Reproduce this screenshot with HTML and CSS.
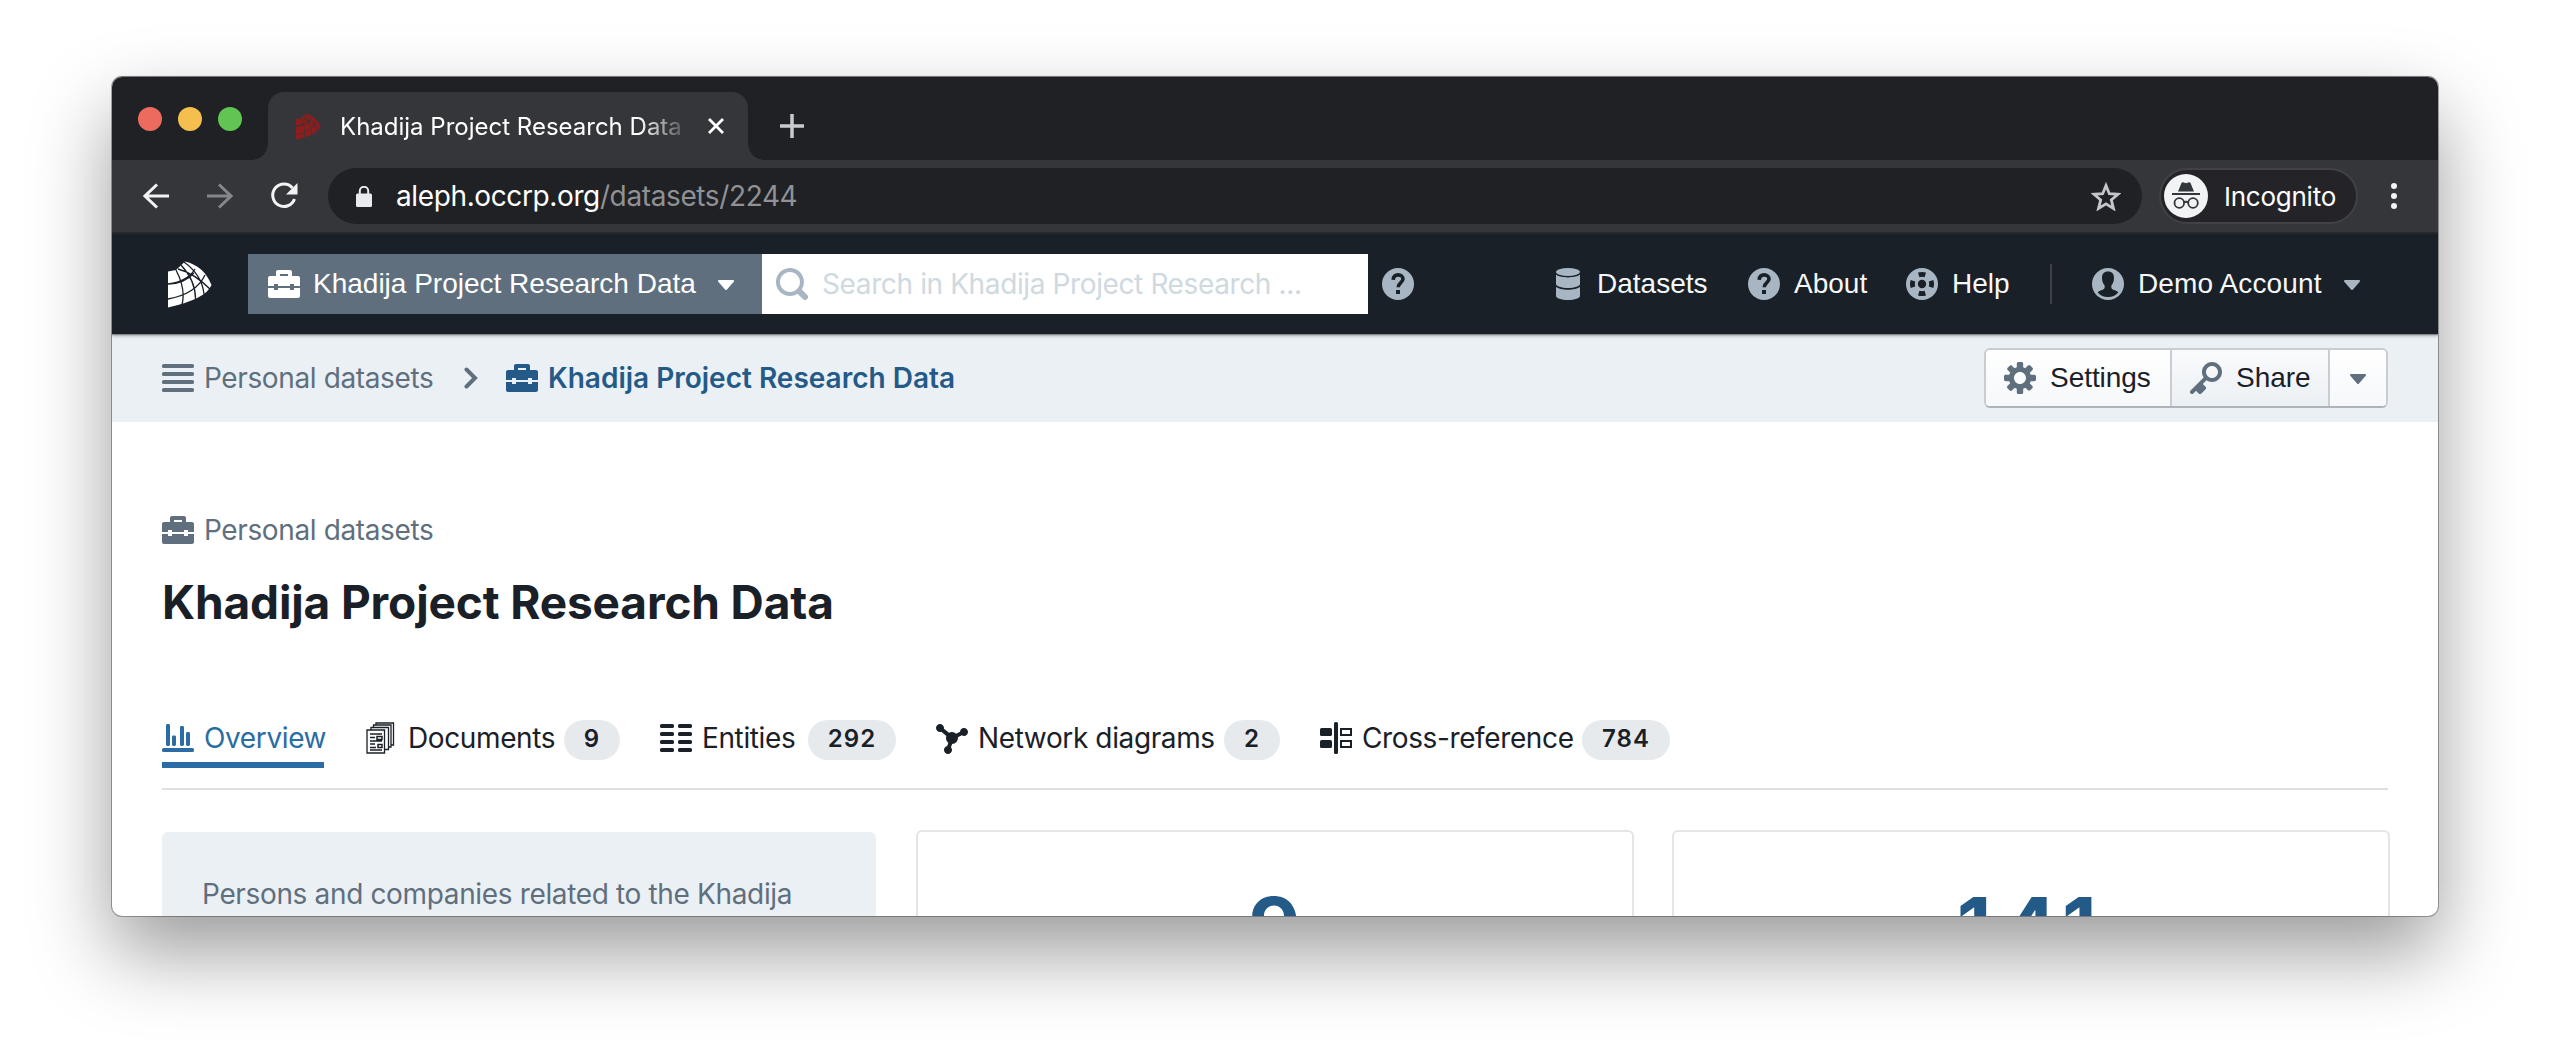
FILE: index.html
```html
<!DOCTYPE html>
<html lang="en">
<head>
<meta charset="utf-8">
<title>Khadija Project Research Data - Aleph</title>
<link rel="stylesheet" href="styles.css">
</head>
<body>
<svg class="defs" width="0" height="0">
  <symbol id="briefcase" viewBox="0 0 16 16"><path d="M15 3.980h-3v-2c0-.55-.45-1-1-1H5c-.55 0-1 .45-1 1v2H1c-.55 0-1 .45-1 1v4h3v-1h2v1h6v-1h2v1h3v-4c0-.55-.45-1-1-1zm-5 0H6v-1h4v1zm3 7h-2v-1H5v1H3v-1H0v4c0 .55.45 1 1 1h14c.55 0 1-.45 1-1v-4h-3v1z"/></symbol>
  <symbol id="caret" viewBox="0 0 16 16"><path d="M12 6.500c0-.28-.22-.5-.5-.5h-7a.495.495 0 00-.37.830l3.500 4c.09.1.22.170.37.170s.28-.07.37-.17l3.500-4c.08-.09.13-.2.13-.33z"/></symbol>
  <symbol id="help" viewBox="0 0 16 16"><circle cx="8" cy="8" r="8"/><path d="M5.600 5.900C5.700 4.300 6.700 3.450 8.100 3.450S10.500 4.300 10.500 5.500C10.500 7.300 8.100 7.300 8.100 9.600" fill="none" stroke="#1a2027" stroke-width="1.800"/><path d="M7 11h2v2H7z" fill="#1a2027"/></symbol>
  <symbol id="globe" viewBox="0 0 44 47">
    <path d="M0 10.500L8 9L17 0.500Q36 5 43.500 24Q38 38 0 46.500Z" fill="currentColor"/>
    <g fill="none" class="globe-lines" stroke-width="1.300"><path d="M0 23Q20 20 27 8M0 38Q28 33 37 14M8 9Q18 28 14 44M13 4Q28 20 27.500 39M16 1Q34 14 36 33M10 8Q26 12 43 29M0 23Q16 23 26 12"/></g>
  </symbol>
</svg>

<div class="window">
  <div class="tabstrip">
    <div class="lights"><i class="red"></i><i class="yellow"></i><i class="green"></i></div>
    <div class="tab">
      <svg class="favicon" viewBox="0 0 44 47"><use href="#globe"/></svg>
      <span class="tab-title">Khadija Project Research Data - Aleph</span>
      <svg class="close" viewBox="0 0 18 18"><path d="M2 2l14 14M16 2L2 16"/></svg>
    </div>
    <svg class="plus" viewBox="0 0 24 24"><path d="M12 0v24M0 12h24"/></svg>
  </div>

  <div class="toolbar">
    <svg class="back" viewBox="0 0 26 26"><path d="M26 13H2M14 1.500L2 13l12 11.500"/></svg>
    <svg class="forward" viewBox="0 0 26 26"><path d="M0 13h24M12 1.500L24 13 12 24.500"/></svg>
    <svg class="reload" viewBox="0 0 28 28"><path d="M22.500 6A11.200 11.200 0 1 0 24.500 17" fill="none" stroke="#f1f3f4" stroke-width="3"/><path d="M27.500 1v11.500H16z" fill="#f1f3f4"/></svg>
    <div class="omnibox">
      <svg class="lock" viewBox="0 0 16 21"><rect y="7.500" width="16" height="13.500" rx="1.500" fill="#e8eaed"/><path d="M3.800 8V5a4.200 4.200 0 018.400 0v3" fill="none" stroke="#e8eaed" stroke-width="2"/></svg>
      <span class="url"><b>aleph.occrp.org</b>/datasets/2244</span>
      <svg class="star" viewBox="0 0 30 29"><path d="M15 3.500l3.300 8.200 8.700.6-6.700 5.600 2.200 8.600L15 21.800l-7.500 4.700 2.200-8.600L3 12.300l8.700-.6z"/></svg>
    </div>
    <div class="incognito">
      <svg viewBox="0 0 44 44"><circle cx="22" cy="22" r="22" fill="#f1f3f4"/><path d="M14 17.500L17.500 9q.5-1 1.500-.7l3 .9 3-.9q1-.3 1.500.7L30 17.500zM8 19h28v2H8z" fill="#33363a"/><g fill="none" stroke="#33363a" stroke-width="1.800"><circle cx="15.300" cy="29" r="4.800"/><circle cx="29" cy="29" r="4.800"/><path d="M20 28.500q2.100-1.500 4.200 0"/></g></svg>
      <span>Incognito</span>
    </div>
    <div class="dots"><i></i><i></i><i></i></div>
  </div>

  <div class="navbar">
    <svg class="logo" viewBox="0 0 44 47"><use href="#globe"/></svg>
    <div class="scope"><svg class="icon"><use href="#briefcase"/></svg><span>Khadija Project Research Data</span><svg class="icon"><use href="#caret"/></svg></div>
    <div class="search"><svg class="icon" viewBox="0 0 16 16"><path d="M15.550 13.430l-2.670-2.680a6.940 6.940 0 001.110-3.760c0-3.870-3.130-7-7-7s-7 3.130-7 7 3.130 7 7 7c1.390 0 2.680-.42 3.760-1.110l2.680 2.670a1.498 1.498 0 102.120-2.120zm-8.560-1.440c-2.760 0-5-2.240-5-5s2.240-5 5-5 5 2.240 5 5-2.240 5-5 5z"/></svg><span>Search in Khadija Project Research ...</span></div>
    <svg class="icon search-help"><use href="#help"/></svg>
    <div class="menu">
      <a class="m-data"><svg class="icon" viewBox="0 0 16 16"><ellipse cx="8" cy="2" rx="6" ry="2"/><path d="M2 3.300c1 .9 3.400 1.400 6 1.400s5-.5 6-1.400V8c0 1.100-2.700 2-6 2s-6-.9-6-2z"/><path d="M2 9.400c1 1 3.400 1.500 6 1.500s5-.5 6-1.500V14c0 1.100-2.700 2-6 2s-6-.9-6-2z"/></svg><span>Datasets</span></a>
      <a class="m-about"><svg class="icon"><use href="#help"/></svg><span>About</span></a>
      <a class="m-help"><svg class="icon" viewBox="0 0 16 16"><circle cx="8" cy="8" r="8"/><g fill="#1a2027"><circle cx="8" cy="8" r="2.100"/><path d="M6 2.300q2-.7 4 0L9.300 4.600q-1.300-.4-2.600 0zM6 13.700q2 .7 4 0l-.7-2.300q-1.300.4-2.600 0zM2.300 6q-.7 2 0 4l2.300-.7q-.4-1.300 0-2.600zM13.700 6q.7 2 0 4l-2.300-.7q.4-1.300 0-2.600z"/></g></svg><span>Help</span></a>
      <i class="divider"></i>
      <a class="m-user"><svg class="icon" viewBox="0 0 16 16"><circle cx="8" cy="8" r="8"/><path d="M8 1.700c2 0 3.100 1.300 3 3.400-.1 1.400-.4 2.600-1.300 3.600-.2 1.600.3 1.900 1.700 2.400.9.300 1.500.7 1.700 1.300A6.700 6.700 0 018 14.500a6.700 6.700 0 01-5.100-2.100c.2-.6.8-1 1.700-1.300 1.400-.5 1.900-.8 1.700-2.400C5.400 7.700 5.100 6.500 5 5.100c-.1-2.100 1-3.400 3-3.400z" fill="#1a2027"/></svg><span>Demo Account</span><svg class="icon"><use href="#caret"/></svg></a>
    </div>
  </div>

  <div class="subheader">
    <svg class="icon" viewBox="0 0 16 16"><rect y="1" width="16" height="2" rx=".8"/><rect y="5" width="16" height="2" rx=".8"/><rect y="9" width="16" height="2" rx=".8"/><rect y="13" width="16" height="2" rx=".8"/></svg>
    <span class="crumb">Personal datasets</span>
    <svg class="chevron" viewBox="0 0 14 22"><path d="M2.500 2.500L11 11l-8.500 8.500"/></svg>
    <svg class="icon blue"><use href="#briefcase"/></svg>
    <span class="crumb current">Khadija Project Research Data</span>
    <div class="buttons">
      <div class="btn b-settings"><svg class="icon" viewBox="0 0 16 16"><path d="M15.190 6.390h-1.850c-.11-.37-.27-.71-.45-1.040l1.360-1.360c.31-.31.31-.82 0-1.130l-1.130-1.130a.803.803 0 00-1.130 0l-1.360 1.360c-.33-.17-.67-.33-1.040-.44V.79c0-.44-.36-.8-.8-.8h-1.600c-.44 0-.8.36-.8.8v1.860c-.39.12-.75.28-1.100.47l-1.300-1.300c-.3-.3-.79-.3-1.090 0L1.820 2.910c-.3.3-.3.79 0 1.090l1.300 1.300c-.2.34-.36.7-.48 1.090H.79c-.44 0-.8.36-.8.8v1.600c0 .44.36.8.8.8h1.850c.11.37.27.71.45 1.040l-1.360 1.360c-.31.31-.31.82 0 1.130l1.130 1.130c.31.31.82.31 1.130 0l1.360-1.360c.33.18.67.33 1.040.44v1.860c0 .44.36.8.8.8h1.600c.44 0 .8-.36.8-.8v-1.860c.39-.12.75-.28 1.100-.47l1.300 1.300c.3.3.79.3 1.090 0l1.090-1.090c.3-.3.3-.79 0-1.090l-1.300-1.300c.19-.35.36-.71.48-1.100h1.850c.44 0 .8-.36.8-.8v-1.600a.816.816 0 00-.81-.79zm-7.200 4.600c-1.660 0-3-1.340-3-3s1.340-3 3-3 3 1.340 3 3-1.340 3-3 3z"/></svg><span>Settings</span></div>
      <div class="btn b-share"><svg class="icon" viewBox="0 0 16 16"><path d="M11 0C8.240 0 6 2.240 6 5c0 1.020.31 1.960.83 2.750L.29 14.290a1.003 1.003 0 001.420 1.420L3 14.410l1.290 1.290c.18.190.43.3.71.3s.53-.11.71-.29l2-2a1.003 1.003 0 000-1.420L6.410 11l1.830-1.830c.8.520 1.740.83 2.760.83 2.760 0 5-2.240 5-5s-2.240-5-5-5zm0 8c-1.660 0-3-1.340-3-3s1.340-3 3-3 3 1.340 3 3-1.340 3-3 3z"/></svg><span>Share</span></div>
      <div class="btn b-more"><svg class="icon"><use href="#caret"/></svg></div>
    </div>
  </div>

  <div class="content">
    <div class="category"><svg class="icon"><use href="#briefcase"/></svg><span>Personal datasets</span></div>
    <h1>Khadija Project Research Data</h1>
    <div class="tabs">
      <div class="item active"><svg class="icon" viewBox="0 0 16 16"><rect y="13" width="16" height="2" rx=".8"/><rect x="2" y="1" width="2" height="11" rx=".7"/><rect x="5" y="6.700" width="2" height="5.300" rx=".7"/><rect x="9" y="2" width="2" height="10" rx=".7"/><rect x="12" y="5" width="2" height="7" rx=".7"/></svg><span class="w-overview">Overview</span></div>
      <div class="item docs"><svg class="icon" viewBox="0 0 32 32"><g fill="#fff" stroke="#1a2027" stroke-width="1.300"><path d="M10 1h17.500v22H10z"/><path d="M7.500 3h17.500v22H7.500z"/><path d="M5 5.500h17.500v22H5z"/><path d="M1 8h17.500v23H1z"/></g><path d="M4 12h12M4 15.500h5M11 14.500h5v3h-5zM4 19h12M4 22h5M4 25.500h6M12 22.500h4v3h-4zM4 28h12" fill="none" stroke="#1a2027" stroke-width="1.500"/></svg><span class="w-documents">Documents</span><em class="one">9</em></div>
      <div class="item"><svg class="icon" viewBox="0 0 16 16"><rect y="1" width="7" height="2" rx=".8"/><rect y="5" width="7" height="2" rx=".8"/><rect y="9" width="7" height="2" rx=".8"/><rect y="13" width="7" height="2" rx=".8"/><rect x="9" y="1" width="7" height="2" rx=".8"/><rect x="9" y="5" width="7" height="2" rx=".8"/><rect x="9" y="9" width="7" height="2" rx=".8"/><rect x="9" y="13" width="7" height="2" rx=".8"/></svg><span class="w-entities">Entities</span><em>292</em></div>
      <div class="item"><svg class="icon" viewBox="0 0 16 16"><path d="M14 3c-1.060 0-1.920.83-1.990 1.880l-1.930.97A2.950 2.950 0 008 5c-.56 0-1.080.16-1.520.43L3.970 3.340C3.980 3.230 4 3.120 4 3c0-1.100-.9-2-2-2s-2 .9-2 2 .9 2 2 2c.24 0 .47-.05.68-.13l2.510 2.090C5.080 7.290 5 7.630 5 8c0 .96.46 1.810 1.160 2.350l-.56 1.690c-.91.190-1.600.99-1.600 1.960 0 1.100.9 2 2 2s2-.9 2-2c0-.51-.2-.97-.51-1.320l.56-1.690A2.990 2.990 0 0011 8c0-.12-.02-.24-.04-.36l1.940-.97c.32.2.69.33 1.100.33 1.100 0 2-.9 2-2s-.9-2-2-2z"/></svg><span class="w-network">Network diagrams</span><em class="one">2</em></div>
      <div class="item"><svg class="icon" viewBox="0 0 16 16"><rect y="3" width="6" height="4" rx=".8"/><rect y="9" width="6" height="4" rx=".8"/><rect x="7" y="0" width="2" height="16" rx=".8"/><path d="M10.500 3.500h5v3h-5zM10.500 9.500h5v3h-5z" fill="none" stroke="#1a2027"/></svg><span class="w-cross">Cross-reference</span><em>784</em></div>
    </div>
    <div class="cards">
      <div class="card summary">Persons and companies related to the Khadija</div>
      <div class="card stat">9</div>
      <div class="card stat">141</div>
    </div>
  </div>
</div>
</body>
</html>
```
FILE: styles.css
```css
* { box-sizing: border-box; }
body {
  margin: 0;
  width: 2550px;
  height: 1064px;
  overflow: hidden;
  background: #fff;
  padding: 77px 112px 0;
  font-family: Inter, "Liberation Sans", sans-serif;
  font-size: 28px;
  letter-spacing: -.38px;
  color: #1a2027;
}
svg { display: block; flex: none; }
.defs { position: absolute; }
.icon { width: 32px; height: 32px; fill: currentColor; }
span, a { white-space: nowrap; }

.window {
  width: 2326px;
  height: 839px;
  border-radius: 10px;
  overflow: hidden;
  background: #fff;
  box-shadow: 0 0 0 1px rgba(0, 0, 0, .3), 0 -1px 1px rgba(0, 0, 0, .3), 0 36px 80px rgba(0, 0, 0, .4);
}

/* browser chrome */
.tabstrip { height: 83px; background: #202124; display: flex; padding-left: 26px; }
.lights { display: flex; gap: 16px; padding-top: 30px; width: 130px; }
.lights i { width: 24px; height: 24px; border-radius: 50%; }
.red { background: #ed6a5e; }
.yellow { background: #f5bf4f; }
.green { background: #61c554; }
.tab {
  position: relative;
  width: 480px;
  height: 68px;
  margin-top: 15px;
  background: #35363a;
  border-radius: 16px 16px 0 0;
  display: flex;
  align-items: center;
  padding-left: 28px;
}
.tab::before, .tab::after {
  content: "";
  position: absolute;
  bottom: 0;
  width: 16px;
  height: 16px;
}
.tab::before { left: -16px; background: radial-gradient(circle at 0 0, transparent 15.5px, #35363a 16px); }
.tab::after { right: -16px; background: radial-gradient(circle at 100% 0, transparent 15.5px, #35363a 16px); }
.favicon { width: 25px; height: 27px; color: #8f1d1d; --line: #35363a; }
.globe-lines { stroke: var(--line); }
.tab-title {
  margin-left: 19px;
  width: 353px;
  overflow: hidden;
  color: #fff;
  font-size: 24px;
  letter-spacing: 0;
  -webkit-mask-image: linear-gradient(90deg, #000 300px, transparent 352px);
  mask-image: linear-gradient(90deg, #000 300px, transparent 352px);
}
.close { width: 18px; height: 18px; margin-left: 14px; fill: none; stroke: #fff; stroke-width: 2.8; }
.plus { width: 24px; height: 24px; margin: 37px 0 0 32px; stroke: #c8cacd; stroke-width: 3.5; }

.toolbar {
  height: 74px;
  background: #35363a;
  border-bottom: 2px solid #28292c;
  display: flex;
  align-items: center;
}
.back, .forward { width: 26px; height: 26px; fill: none; stroke: #f1f3f4; stroke-width: 3; }
.back { margin-left: 31px; }
.forward { margin-left: 38px; stroke: #85868a; }
.reload { width: 28px; height: 28px; margin-left: 37px; }
.omnibox {
  width: 1814px;
  height: 56px;
  margin-left: 30px;
  border-radius: 28px;
  background: #202124;
  display: flex;
  align-items: center;
  padding: 0 21px 0 28px;
}
.lock { width: 16px; height: 21px; }
.url { margin-left: 24px; color: #8f9195; flex: 1; }
.url b { color: #fff; font-weight: 400; }
.star { width: 30px; height: 29px; fill: none; stroke: #c4c6c9; stroke-width: 2.8; }
.incognito {
  width: 199px;
  height: 56px;
  margin-left: 17px;
  border-radius: 28px;
  border: 2px solid #414246;
  background: #242428;
  display: flex;
  align-items: center;
  padding-left: 3px;
  gap: 16px;
  color: #fff;
  font-size: 26px;
  letter-spacing: -.25px;
}
.incognito svg { width: 44px; height: 44px; }
.dots { margin-left: 33px; display: grid; gap: 4px; }
.dots i { width: 6px; height: 6px; border-radius: 50%; background: #f1f3f4; }

/* app header */
.navbar {
  position: relative;
  height: 100px;
  background: #1a2027;
  display: flex;
  align-items: center;
  padding-left: 56px;
  font-family: "Liberation Sans", Arial, sans-serif;
  letter-spacing: 0;
  color: #f5f8fa;
  box-shadow: 0 1px 1px rgba(16, 22, 26, .3), 0 2px 3px rgba(16, 22, 26, .3);
}
.logo { width: 44px; height: 47px; color: #fff; --line: #1a2027; }
.scope {
  width: 514px;
  height: 60px;
  margin-left: 36px;
  background: #5f6f7e;
  display: flex;
  align-items: center;
  gap: 13px;
  padding-left: 20px;
  color: #fff;
}
.scope svg:last-child { margin-left: 1px; }
.search {
  width: 606px;
  height: 60px;
  background: #fff;
  color: #a7b6c2;
  display: flex;
  align-items: center;
  gap: 14px;
  padding-left: 14px;
  font-family: Inter, sans-serif;
  letter-spacing: -.38px;
}
.search span { color: #ced9e0; }
.search-help { margin-left: 14px; color: #a7b6c2; }
.menu { margin-left: 138px; display: flex; align-items: center; }
.menu a { display: flex; align-items: center; gap: 14px; }
.menu svg { color: #a7b6c2; }
.menu .m-data { width: 196px; gap: 13px; }
.m-about { width: 158px; }
.m-help { width: 144px; }
.m-user { letter-spacing: .12px; }
.divider { width: 2px; height: 40px; background: #3d4249; margin-right: 40px; }

/* breadcrumbs */
.subheader {
  height: 88px;
  background: #ebf0f4;
  display: flex;
  align-items: center;
  padding: 0 50px;
  color: #5f6f7e;
}
.crumb { margin-left: 10px; width: 229px; }
.current { color: #245a88; font-weight: 600; letter-spacing: 0; }
.chevron { width: 14px; height: 22px; margin: 0 28px 0 31px; fill: none; stroke: #5f6f7e; stroke-width: 4; stroke-linecap: round; }
.blue { color: #245a88; }
.buttons {
  margin-left: auto;
  height: 60px;
  border: 2px solid #c9cdd1;
  border-bottom-color: #aeb4ba;
  border-radius: 6px;
  overflow: hidden;
  display: flex;
  font-family: "Liberation Sans", Arial, sans-serif;
  letter-spacing: -.05px;
  background: #f8fafb;
}
.btn {
  display: flex;
  align-items: center;
  gap: 14px;
  padding-left: 18px;
  border-left: 2px solid #c9cdd1;
  background: linear-gradient(#fff, #f6f8fa);
}
.btn:first-child { border-left: 0; }
.btn span { color: #1a2027; }
.b-settings { width: 184px; }
.b-share { width: 158px; background: linear-gradient(#fafbfc, #ebf0f4); }
.b-more { width: 58px; padding-left: 12px; }

/* dataset page */
.content { padding: 92px 50px 0; }
.category { display: flex; align-items: center; gap: 10px; height: 32px; color: #5f6f7e; }
h1 { margin: 26px 0 0; font-size: 46px; line-height: 60px; font-weight: 700; letter-spacing: -.13px; }
.tabs { display: flex; gap: 40px; height: 90px; margin-top: 68px; border-bottom: 2px solid #dce0e5; }
.item { display: flex; align-items: center; height: 68px; padding-top: 8px; }
.item span { margin-left: 10px; }
.docs { margin-left: 2px; }
.w-overview { width: 120px; }
.w-documents { width: 145px; }
.w-entities { width: 95px; }
.w-network { width: 235px; }
.w-cross { width: 209px; }
.item em {
  margin: 4px 0 0 11px;
  width: 88px;
  height: 40px;
  line-height: 38px;
  border-radius: 20px;
  background: #e7eaed;
  text-align: center;
  font-style: normal;
  font-weight: 600;
  font-size: 24px;
  letter-spacing: 1px;
}
.item .one { width: 56px; }
.active { color: #2a6ca3; box-shadow: inset 0 -6px #2a6ca3; }
.cards { display: flex; margin-top: 40px; gap: 38px; }
.card { flex: none; height: 300px; width: 718px; border: 2px solid #e3e5e7; border-radius: 6px; }
.summary { margin-top: 2px; width: 714px; margin-right: 2px; border: 0; background: #ebf0f4; color: #5f6f7e; padding: 43px 40px; line-height: 38px; letter-spacing: -.35px; }
.stat { text-align: center; color: #245a88; font-size: 80px; font-weight: 700; line-height: 96px; padding-top: 46px; letter-spacing: 1px; font-feature-settings: "tnum"; }
```
